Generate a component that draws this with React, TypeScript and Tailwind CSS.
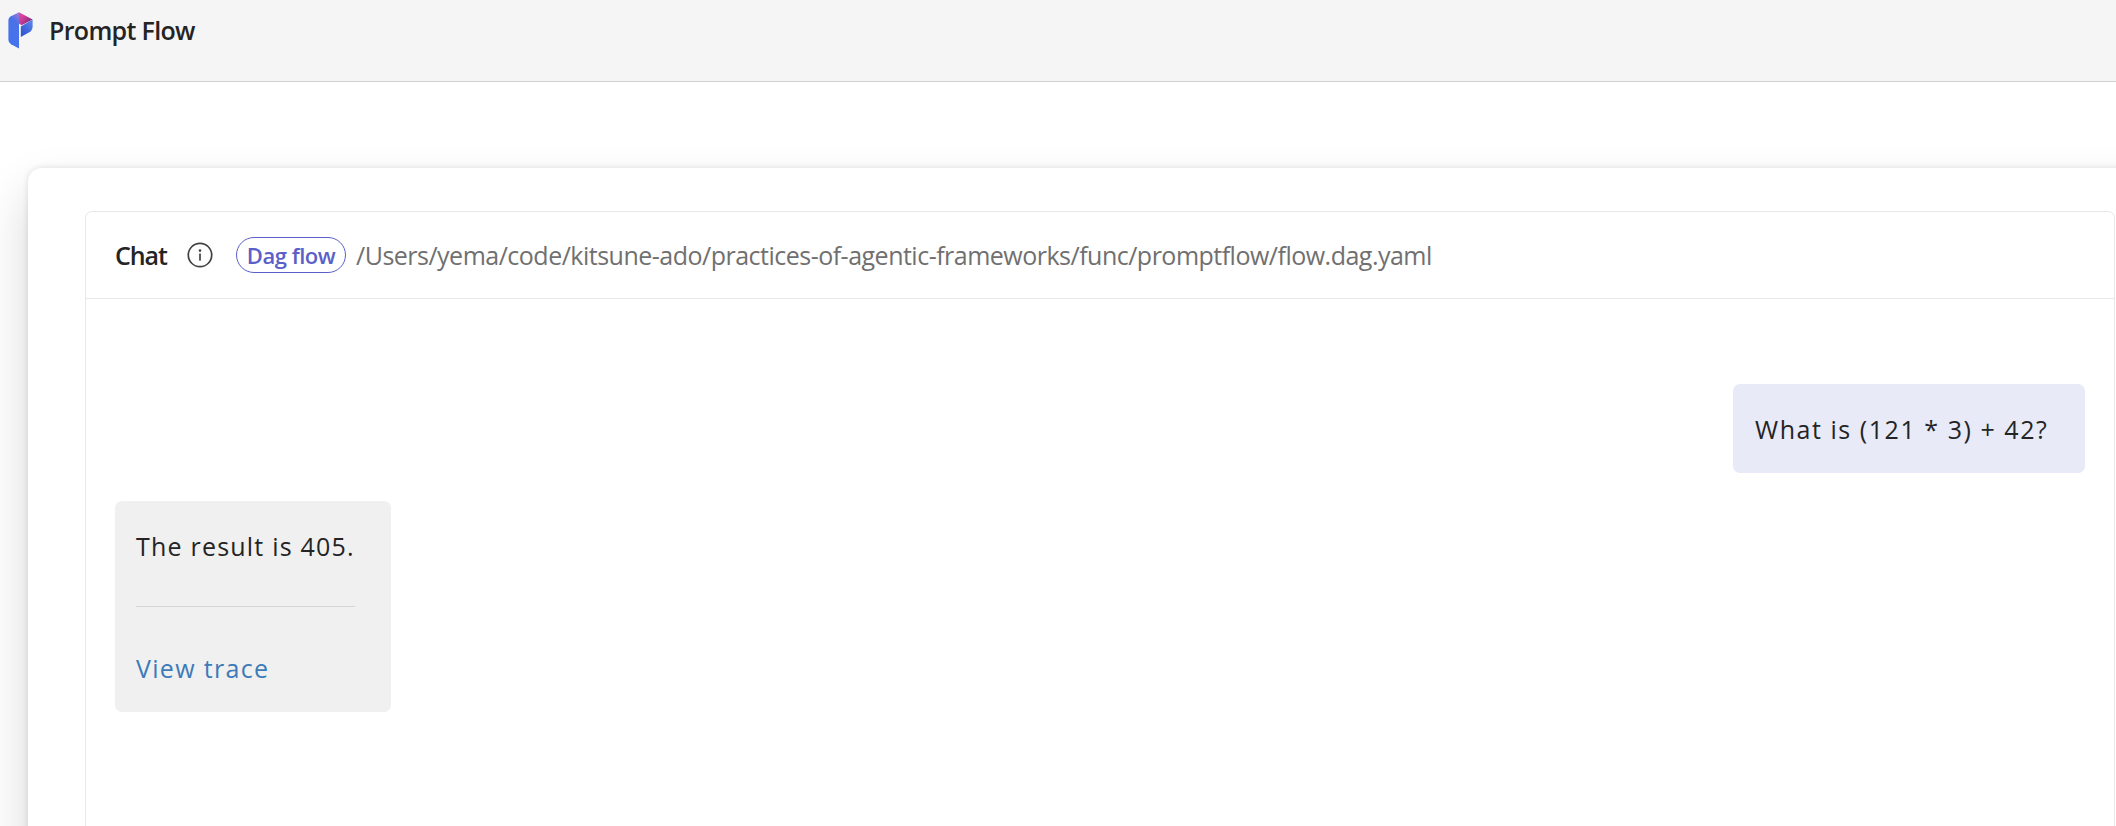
import type { ReactNode } from "react";

function Logo() {
  return (
    <svg width="25" height="37" viewBox="0 0 25 37" className="shrink-0">
      <defs>
        <linearGradient id="stem" x1="0.9" y1="0" x2="0.6" y2="1">
          <stop offset="0" stopColor="#a878d4" />
          <stop offset="0.3" stopColor="#4a72e6" />
          <stop offset="1" stopColor="#4472ee" />
        </linearGradient>
        <linearGradient id="top" x1="0" y1="0" x2="1" y2="0.7">
          <stop offset="0" stopColor="#ec4cab" />
          <stop offset="0.5" stopColor="#c23a94" />
          <stop offset="1" stopColor="#6b2a72" />
        </linearGradient>
        <linearGradient id="side" x1="1" y1="0" x2="0.3" y2="1">
          <stop offset="0" stopColor="#5f86f0" />
          <stop offset="1" stopColor="#2f57cf" />
        </linearGradient>
      </defs>
      <path d="M11 0.2V36.6L3 32.3Q0.4 30.8 0.4 28V8Q0.4 5.6 2.5 4.5Z" fill="url(#stem)" />
      <path d="M11 0.2L24.6 7.4L13.6 13.2L11 11.6Z" fill="url(#top)" />
      <path d="M24.6 7.4V14.5Q24.6 18.3 21.3 20.2L12.8 25V14.5Z" fill="url(#side)" />
    </svg>
  );
}

function InfoIcon() {
  return (
    <svg width="26" height="26" viewBox="0 0 26 26" fill="none" className="shrink-0">
      <circle cx="13" cy="13" r="11.7" stroke="#424242" strokeWidth="1.7" />
      <path d="M13 12V18" stroke="#424242" strokeWidth="1.7" strokeLinecap="round" />
      <circle cx="13" cy="8.6" r="1.3" fill="#424242" />
    </svg>
  );
}

function Bubble({ className, children }: { className: string; children: ReactNode }) {
  return (
    <div className={`rounded-[7px] text-[25px] leading-[44px] whitespace-nowrap ${className}`}>
      {children}
    </div>
  );
}

export default function App() {
  return (
    <div className="flex h-[826px] w-full flex-col overflow-hidden bg-white font-['Open_Sans','Noto_Sans',sans-serif] text-[#242424]">
      <header className="flex h-[82px] shrink-0 items-start border-b border-[#d1d1d1] bg-[#f5f5f5] pt-3 pl-2">
        <Logo />
        <h1 className="ml-4 text-[25px] leading-9 font-semibold tracking-[-0.676px]">Prompt Flow</h1>
      </header>

      <main className="flex min-h-0 flex-1 overflow-hidden pt-[86px] pl-7">
        <div className="-mb-24 flex w-[2200px] shrink-0 rounded-tl-[14px] bg-white pt-[43px] pl-[57px] shadow-[0_0_6px_rgba(0,0,0,0.12),0_25px_50px_rgba(0,0,0,0.16)]">
          <section className="flex w-[2030px] flex-col rounded-t-[7px] border border-[#e8e8e8]">
            <div className="flex h-[87px] shrink-0 items-center border-b border-[#e8e8e8] pl-[29px]">
              <h2 className="w-[57px] text-[25px] leading-9 font-semibold tracking-[-1.1px]">Chat</h2>
              <div className="ml-[15px] flex">
                <InfoIcon />
              </div>
              <span className="ml-[23px] flex h-9 w-[110px] items-center justify-center rounded-full border border-[#5b5fc7] text-[22px] leading-[34px] font-semibold tracking-[-0.473px] text-[#5b5fc7]">
                Dag flow
              </span>
              <span className="ml-[10px] text-[25px] leading-9 tracking-[-0.506px] whitespace-nowrap text-[#707070]">
                /Users/yema/code/kitsune-ado/practices-of-agentic-frameworks/func/promptflow/flow.dag.yaml
              </span>
            </div>

            <div className="flex flex-1 flex-col gap-7 px-[29px] pt-[85px]">
              <Bubble className="h-[89px] w-[352px] self-end bg-[#e8eaf8] pt-[23px] pl-[22px] tracking-[1.546px]">
                What is (121 * 3) + 42?
              </Bubble>
              <Bubble className="flex h-[211px] w-[276px] flex-col bg-[#f0f0f0] pt-[23px] pr-9 pl-[21px]">
                <p className="tracking-[1.209px]">The result is 405.</p>
                <hr className="mt-[38px] border-t border-[#d6d6d6]" />
                <a className="mt-[39px] tracking-[1.32px] text-[#3d7ab8]">View trace</a>
              </Bubble>
            </div>
          </section>
        </div>
      </main>
    </div>
  );
}
